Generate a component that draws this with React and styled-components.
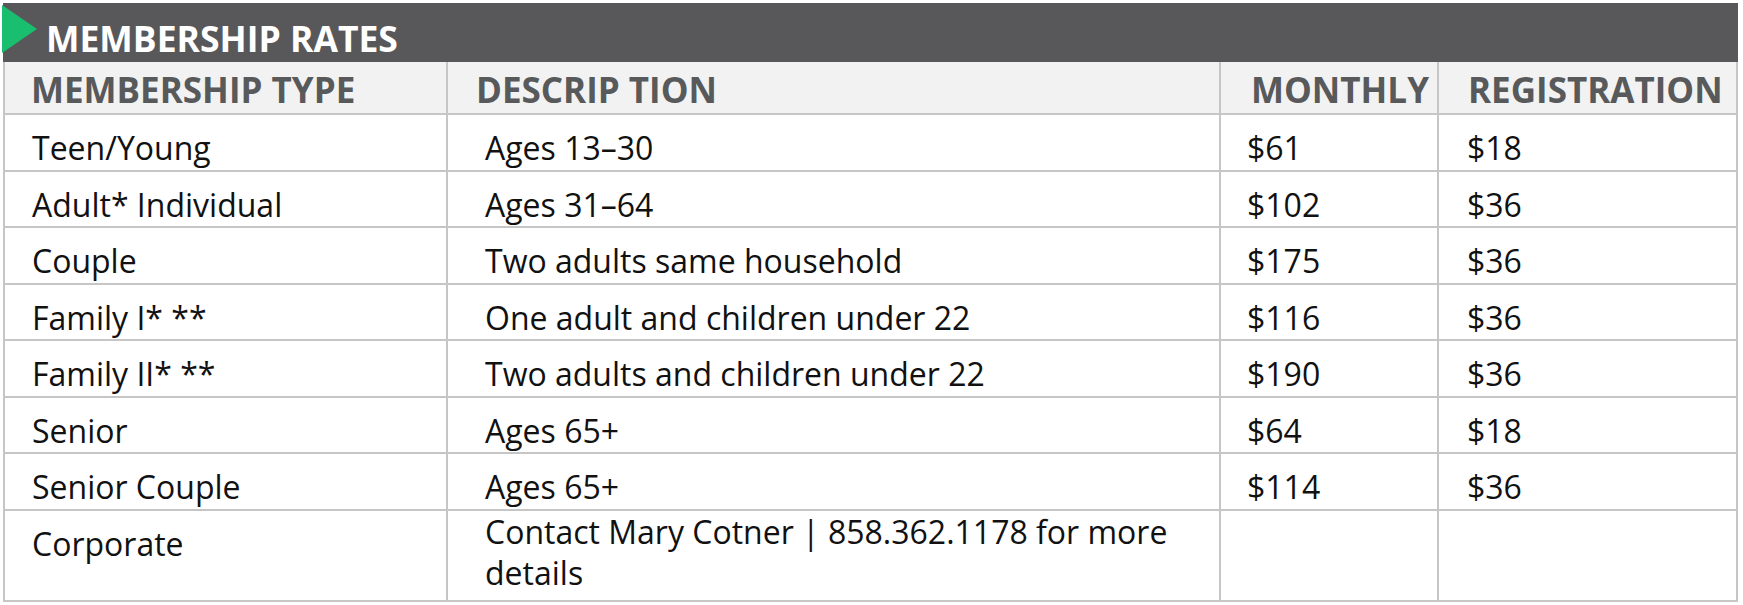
import React from "react";
import styled, { createGlobalStyle } from "styled-components";

const GlobalStyle = createGlobalStyle`
  body {
    margin: 0;
    background: #ffffff;
    font-family: "Open Sans", "Noto Sans", sans-serif;
  }
`;

const Page = styled.div`
  padding: 3px 0 0 3px;
`;

const Card = styled.section`
  width: 1735px;
`;

const TitleBar = styled.div`
  display: flex;
  align-items: flex-start;
  gap: 9px;
  height: 59px;
  padding-top: 2px;
  box-sizing: border-box;
  background: #58585a;
`;

const Flag = styled.svg`
  display: block;
  flex: none;
  margin-left: -1px;
`;

const Title = styled.h1`
  margin: 0;
  padding-top: 13px;
  font-size: 35.5px;
  line-height: 40px;
  font-weight: 700;
  color: #ffffff;
`;

const Table = styled.div`
  display: grid;
  grid-template-columns: 443px 773px 218px 299px;
  border-left: 2px solid #c6c6c6;
`;

const HeadCell = styled.div`
  padding: 8px 4px 3px ${(p) => p.$indent}px;
  background: #f2f2f2;
  border-right: 2px solid #c6c6c6;
  border-bottom: 2px solid #c6c6c6;
  font-size: 35px;
  line-height: 40px;
  font-weight: 700;
  color: #58595b;
  white-space: nowrap;
`;

const Cell = styled.div`
  padding: ${(p) => (p.$top ? "0px 10px 7px" : "13px 10px 1.5px")};
  padding-left: ${(p) => p.$indent}px;
  border-right: 2px solid #c6c6c6;
  border-bottom: 2px solid #c6c6c6;
  font-size: 32px;
  line-height: ${(p) => (p.$top ? "41px" : "40px")};
  color: #111111;
`;

const columns = [
  { label: "MEMBERSHIP TYPE", head: 26, body: 27 },
  { label: "DESCRIP TION", head: 28, body: 37 },
  { label: "MONTHLY", head: 30, body: 26 },
  { label: "REGISTRATION", head: 29, body: 28 },
];

const rates = [
  ["Teen/Young", "Ages 13–30", "$61", "$18"],
  ["Adult* Individual", "Ages 31–64", "$102", "$36"],
  ["Couple", "Two adults same household", "$175", "$36"],
  ["Family I* **", "One adult and children under 22", "$116", "$36"],
  ["Family II* **", "Two adults and children under 22", "$190", "$36"],
  ["Senior", "Ages 65+", "$64", "$18"],
  ["Senior Couple", "Ages 65+", "$114", "$36"],
];

const MembershipRates = () => (
  <Card>
    <TitleBar>
      <Flag width="35" height="48" viewBox="0 0 35 48">
        <polygon points="0,0 35,24 0,48" fill="#19bf6e" />
      </Flag>
      <Title>MEMBERSHIP RATES</Title>
    </TitleBar>
    <Table>
      {columns.map((c) => (
        <HeadCell key={c.label} $indent={c.head}>
          {c.label}
        </HeadCell>
      ))}
      {rates.map((row) =>
        row.map((value, i) => (
          <Cell key={row[0] + i} $indent={columns[i].body}>
            {value}
          </Cell>
        ))
      )}
      <Cell $indent={columns[0].body}>Corporate</Cell>
      <Cell $indent={columns[1].body} $top>
        Contact Mary Cotner | 858.362.1178 for more details
      </Cell>
      <Cell $indent={columns[2].body} />
      <Cell $indent={columns[3].body} />
    </Table>
  </Card>
);

export default function App() {
  return (
    <>
      <GlobalStyle />
      <Page>
        <MembershipRates />
      </Page>
    </>
  );
}
